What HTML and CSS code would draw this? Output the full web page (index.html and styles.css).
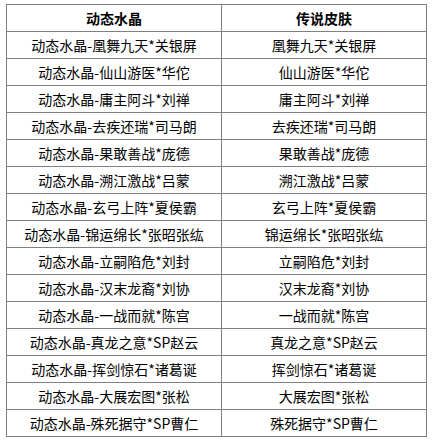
FILE: index.html
```html
<!DOCTYPE html>
<html lang="zh-CN">
<head>
<meta charset="utf-8">
<title>动态水晶</title>
<link rel="stylesheet" href="styles.css">
</head>
<body>
<div class="wrap">
<table class="skins">
<thead>
<tr><th class="c1">动态水晶</th><th class="c2">传说皮肤</th></tr>
</thead>
<tbody>
<tr><td>动态水晶-凰舞九天*关银屏</td><td>凰舞九天*关银屏</td></tr>
<tr><td>动态水晶-仙山游医*华佗</td><td>仙山游医*华佗</td></tr>
<tr><td>动态水晶-庸主阿斗*刘禅</td><td>庸主阿斗*刘禅</td></tr>
<tr><td>动态水晶-去疾还瑞*司马朗</td><td>去疾还瑞*司马朗</td></tr>
<tr><td>动态水晶-果敢善战*庞德</td><td>果敢善战*庞德</td></tr>
<tr><td>动态水晶-溯江激战*吕蒙</td><td>溯江激战*吕蒙</td></tr>
<tr><td>动态水晶-玄弓上阵*夏侯霸</td><td>玄弓上阵*夏侯霸</td></tr>
<tr><td>动态水晶-锦运绵长*张昭张纮</td><td>锦运绵长*张昭张纮</td></tr>
<tr><td>动态水晶-立嗣陷危*刘封</td><td>立嗣陷危*刘封</td></tr>
<tr><td>动态水晶-汉末龙裔*刘协</td><td>汉末龙裔*刘协</td></tr>
<tr><td>动态水晶-一战而就*陈宫</td><td>一战而就*陈宫</td></tr>
<tr><td>动态水晶-真龙之意*SP赵云</td><td>真龙之意*SP赵云</td></tr>
<tr><td>动态水晶-挥剑惊石*诸葛诞</td><td>挥剑惊石*诸葛诞</td></tr>
<tr><td>动态水晶-大展宏图*张松</td><td>大展宏图*张松</td></tr>
<tr><td>动态水晶-殊死据守*SP曹仁</td><td>殊死据守*SP曹仁</td></tr>
</tbody>
</table>
</div>
</body>
</html>
```
FILE: styles.css
```css
html, body {
  margin: 0;
  padding: 0;
  background: #ffffff;
}
.wrap {
  padding: 4px 0 0 6px;
}
.skins {
  border-collapse: separate;
  border-spacing: 0;
  border-top: 1px solid #808080;
  border-left: 1px solid #808080;
  font-family: "Noto Sans CJK SC", "Liberation Sans", sans-serif;
  font-size: 14px;
  color: #000000;
  table-layout: fixed;
}
.skins th,
.skins td {
  height: 26px;
  padding: 0;
  border-right: 1px solid #808080;
  border-bottom: 1px solid #808080;
  text-align: center;
  vertical-align: middle;
  line-height: 26px;
  white-space: nowrap;
  overflow: hidden;
}
.skins th {
  font-weight: 700;
}
.skins .c1 {
  width: 214px;
}
.skins .c2 {
  width: 204px;
}
```
